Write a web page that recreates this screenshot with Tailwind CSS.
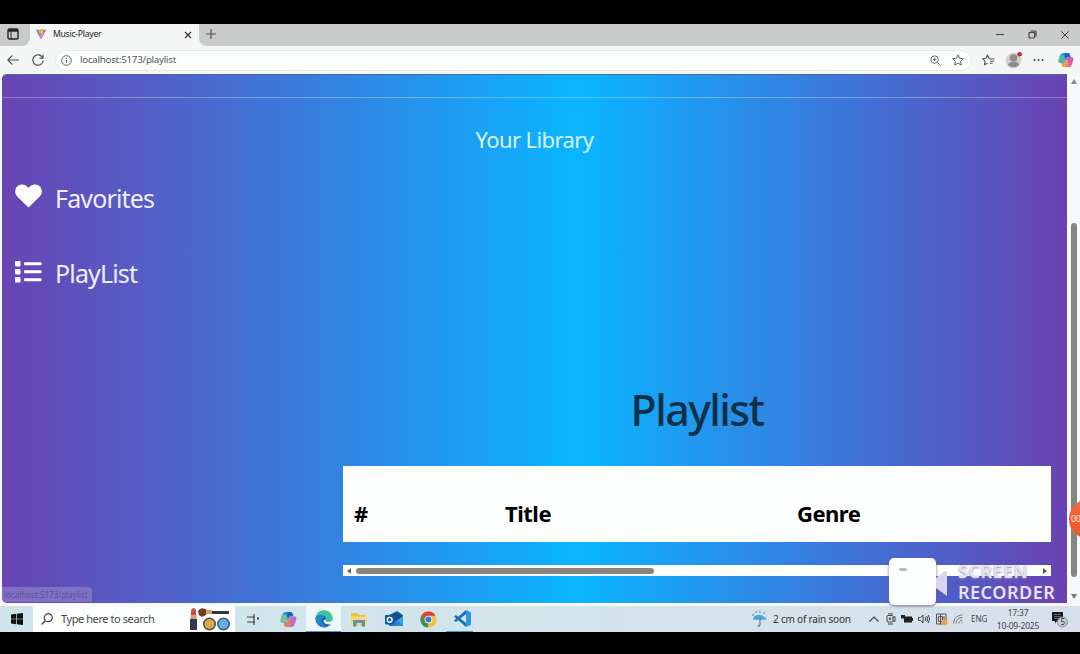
<!DOCTYPE html>
<html lang="en">
<head>
<meta charset="utf-8">
<title>Music-Player</title>
<script src="https://cdn.jsdelivr.net/npm/@tailwindcss/browser@4"></script>
</head>
<body class="relative flex h-[654px] w-[1080px] flex-col overflow-hidden bg-black pt-6 font-['Noto_Sans','Open_Sans',sans-serif] whitespace-nowrap">

<!-- Tab strip -->
<header class="flex h-[22px] shrink-0 bg-[#f3f6f4]">
  <div class="flex w-[30px] items-center justify-start rounded-br-lg bg-[#c8cbc9] pb-[2px] pl-[7px]">
    <svg class="size-3" viewBox="0 0 12 12" fill="none" stroke="#222" stroke-width="1.4"><rect x="1" y="1" width="10" height="10" rx="1.5"/><path d="M1 2.5h10" stroke-width="2.4"/><path d="M4 3v8" stroke-width="1"/></svg>
  </div>
  <div class="flex w-[169px] items-center pr-[7px] pl-[5px] pb-[3px]">
    <svg class="size-3" viewBox="0 0 12 12"><defs><linearGradient id="vite" x1="0" y1="0" x2="1" y2="0.5"><stop offset="0" stop-color="#58b5e0"/><stop offset=".5" stop-color="#a06bd0"/><stop offset="1" stop-color="#b08be0"/></linearGradient></defs><path d="M0.5 1.5 6 2.3 11.5 1.5 6 11.5Z" fill="url(#vite)"/><path d="M4 1.5 8.7 .8 7.8 4.2 9 4 5.7 9.5 6 5.5 4.3 6Z" fill="#f2b632"/></svg>
    <span class="ml-[6px] text-[8.6px] leading-3 tracking-[-0.25px] text-[#222]">Music-Player</span>
    <svg class="mt-[2px] ml-auto size-2" viewBox="0 0 8 8" stroke="#333" stroke-width="1.2"><path d="M1 1l6 6M7 1L1 7"/></svg>
  </div>
  <div class="flex flex-1 items-center rounded-bl-lg bg-[#c8cbc9] pr-[11px] pl-[7px] pb-[3px]">
    <svg class="size-[10px]" viewBox="0 0 10 10" stroke="#555" stroke-width="1.2"><path d="M5 0v10M0 5h10"/></svg>
    <div class="ml-auto flex items-center gap-[24px] pt-[2px]">
      <svg class="h-2 w-2" viewBox="0 0 8 8" stroke="#444" stroke-width="1"><path d="M0 3.5h8"/></svg>
      <svg class="size-[9px]" viewBox="0 0 9 9" fill="none" stroke="#444" stroke-width="1.2"><rect x="1" y="2.4" width="5.6" height="5.6" rx="1"/><path d="M2.8 1H7q1 0 1 1v4.5"/></svg>
      <svg class="size-2" viewBox="0 0 8 8" stroke="#444" stroke-width="1"><path d="M.3.3l7.4 7.4M7.7.3L.3 7.7"/></svg>
    </div>
  </div>
</header>

<!-- Address bar -->
<div class="flex h-7 shrink-0 items-center bg-[#f3f6f5] pl-[7px] pr-[6px]">
  <svg class="h-[10px] w-3" viewBox="0 0 12 10" fill="none" stroke="#555" stroke-width="1.1"><path d="M12 5H1M5.3.5.8 5l4.500 4.500"/></svg>
  <svg class="ml-[13px] size-3" viewBox="0 0 12 12" fill="none" stroke="#555" stroke-width="1.2"><path d="M10.8 4A5.2 5.2 0 1 0 11.2 6.5M11 .8V4.2H7.6"/></svg>
  <div class="ml-[11px] flex h-[21px] w-[917px] items-center rounded-full border border-[#e3e7e5] bg-[#fdfffe] pl-[5px] pr-[7px]">
    <svg class="size-[11px]" viewBox="0 0 11 11" fill="none" stroke="#666" stroke-width="1"><circle cx="5.5" cy="5.5" r="4.8"/><path d="M5.5 5v3M5.5 2.8v1.1"/></svg>
    <span class="ml-[8px] text-[9.8px] leading-3 tracking-[-0.28px] text-[#555]">localhost:5173/playlist</span>
    <svg class="ml-auto size-[11px]" viewBox="0 0 11 11" fill="none" stroke="#666" stroke-width="1"><circle cx="4.6" cy="4.6" r="3.7"/><path d="M7.4 7.4l3.2 3.2M2.8 4.6h3.6M4.6 2.8v3.6"/></svg>
    <svg class="ml-[11px] size-3" viewBox="0 0 12 12" fill="none" stroke="#666" stroke-width="1" stroke-linejoin="round"><path d="M6 .8l1.6 3.4 3.7.5-2.7 2.6.7 3.7L6 9.2 2.7 11l.7-3.7L.7 4.7l3.7-.5Z"/></svg>
  </div>
  <svg class="ml-[10px] h-3 w-[13px]" viewBox="0 0 13 12" fill="none" stroke="#555" stroke-width="1.1" stroke-linejoin="round"><path d="M8.4 4.2 6.9 4.1 5.5 1 4 4.2.6 4.7 3 7.2l-.6 3.6 3.1-1.5M8 5h4.5M8 7.2h4M8 9.3h2.5"/></svg>
  <svg class="ml-[10px] h-[18px] w-[18px]" viewBox="0 0 18 18"><circle cx="8.5" cy="9.5" r="7.8" fill="#d2d0cf"/><circle cx="8.5" cy="7" r="3.7" fill="#8d8b8b"/><path d="M3 14q0-3 5.5-3T14 14q-5.500 4.500-11 0Z" fill="#8d8b8b"/><circle cx="14.600" cy="3.200" r="2.300" fill="#c3292c"/></svg>
  <svg class="ml-[10px] h-3 w-[11px]" viewBox="0 0 11 12" fill="#444"><circle cx="1.500" cy="6" r="1"/><circle cx="5.500" cy="6" r="1"/><circle cx="9.500" cy="6" r="1"/></svg>
  <svg class="ml-auto size-4" viewBox="0 0 16 16"><path d="M5 1h5q1.500 0 2 2l.5 2H9L6.500 11H3Q0 11 .7 8L2 3.500Q3 1 5 1Z" fill="#2793d8"/><path d="M2 3.500 .7 8Q0 11 3 11h3.500l1-4L5 3Z" fill="#51b9a0"/><path d="M10 1q1.500 0 2 2l.5 2H9l-1.500 3L6.500 3Q7 1 8 1Z" fill="#2161c8"/><path d="M13 5q3 0 2.300 3L14 12.500Q13 15 11 15H6q-1.500 0-2-2l-.5-2H7L9.500 5Z" fill="#d95caa"/><path d="M3.500 11H7l2-4 1.500 5Q10 15 8 15H6q-2 0-2.500-4Z" fill="#f59a48"/></svg>
</div>

<!-- Viewport -->
<div class="flex h-[532px] shrink-0 bg-[#f6f8fa] pl-[2px] pb-[3px]">
  <main class="relative flex w-[1065px] flex-col overflow-hidden rounded-tl-[5px] rounded-bl-[5px] border-t border-[#4a66a8] bg-[linear-gradient(90deg,#6944b4_0%,#535fc7_14%,#3f75d8_25%,#0ab4ff_53.500%,#0ab4ff_54.500%,#3f73d8_80%,#535bc4_90%,#6a42b2_100%)]">
    <div class="h-[23px] shrink-0 border-b border-white/30"></div>
    <h2 class="mt-[26px] text-center text-[22px] leading-[30px] tracking-[-0.6px] text-[#d8f4ff]">Your Library</h2>
    <nav class="mt-[26px] flex flex-col gap-[39px] pl-[13px] text-[25px] leading-9 tracking-[-0.85px] text-[#eeeefc]">
      <a class="flex items-center"><svg class="mb-[4px] h-6 w-[27px]" viewBox="0 0 27 24" fill="#fff"><path d="M13.500 23.500 2 12.200C-1 9 0 4 3 1.800 6.500-.6 10.500.3 13.500 3.800 16.500.3 20.500-.6 24 1.800 27 4 28 9 25 12.200Z"/></svg><span class="ml-[13px]">Favorites</span></a>
      <a class="flex items-center"><svg class="mb-[3px] h-6 w-[27px]" viewBox="0 0 27 24" fill="#fff"><rect x="0" y="1" width="5.500" height="5.500" rx="1"/><rect x="0" y="9" width="5.500" height="5.500" rx="1"/><rect x="0" y="17" width="5.500" height="5.500" rx="1"/><rect x="9" y="2.300" width="17.500" height="3" rx="1"/><rect x="9" y="10.300" width="17.500" height="3" rx="1"/><rect x="9" y="18.300" width="17.500" height="3" rx="1"/></svg><span class="ml-[13px]">PlayList</span></a>
    </nav>
    <section class="mt-[88px] ml-[341px] w-[708px]">
      <h1 class="pt-px text-center text-[43px] leading-[60px] font-medium tracking-[-1.6px] text-[#102f48]">Playlist</h1>
      <div class="mt-[26px] flex h-[76px] items-end bg-[#fcfffe] pb-[14px] text-[22px] leading-[30px] font-bold tracking-[-0.5px] text-black">
        <span class="w-[162px] pl-[11px]">#</span><span class="w-[292px]">Title</span><span>Genre</span>
      </div>
      <div class="mt-[23px] flex h-[11px] items-center justify-between bg-[#fcfffe] px-1">
        <svg class="h-[6px] w-1" viewBox="0 0 4 6" fill="#666"><path d="M4 0v6L0 3Z"/></svg>
        <div class="mr-auto ml-[5px] h-[6px] w-[298px] rounded-full bg-[#858585]"></div>
        <svg class="h-[6px] w-1" viewBox="0 0 4 6" fill="#555"><path d="M0 0v6l4-3Z"/></svg>
      </div>
    </section>
    <div class="absolute bottom-[1px] left-0 h-[15px] w-[90px] rounded-tr-sm bg-[#8779c5]/80 pl-[2px] text-[8px] leading-[15px] text-[#5a529c]">localhost:5173/playlist</div>
  </main>
  <div class="flex flex-1 flex-col items-center pt-[5px] pb-1">
    <svg class="h-[5px] w-[6px]" viewBox="0 0 6 5" fill="#888"><path d="M3 0 6 5H0Z"/></svg>
    <div class="mt-[139px] h-[354px] w-[6px] rounded-full bg-[#858585]"></div>
    <svg class="mt-auto h-[5px] w-[6px]" viewBox="0 0 6 5" fill="#777"><path d="M0 0h6L3 5Z"/></svg>
  </div>
</div>

<!-- Taskbar -->
<footer class="flex h-[26px] shrink-0 items-center bg-[linear-gradient(90deg,#cde5eb,#d3e4eb_45%,#d7e0ec)]">
  <div class="flex w-[33px] justify-center"><svg class="size-3" viewBox="0 0 12 12" fill="#111"><path d="M0 1.500 5.300.8v4.900H0ZM6 .7 12 0v5.700H6ZM0 6.300h5.300v4.900L0 10.500ZM6 6.300h6V12l-6-.7Z"/></svg></div>
  <div class="flex h-full w-[202px] items-center bg-[#fcfffe] pl-2">
    <svg class="size-3" viewBox="0 0 12 12" fill="none" stroke="#444" stroke-width="1.200"><circle cx="7.300" cy="4.700" r="4"/><path d="M4.500 7.500.5 11.500"/></svg>
    <span class="ml-2 text-[11px] leading-4 tracking-[-0.42px] text-[#444]">Type here to search</span>
    <svg class="ml-auto h-6 w-[46px]" viewBox="0 0 46 24"><path d="M2 3q3-4 5 0v8H2Z" fill="#c55448"/><rect x="1.500" y="8" width="6" height="4" fill="#d99c7a"/><rect x="1" y="12" width="7" height="11" fill="#343b50"/><path d="M9 4q3-5 9-1v4q-5 5-8 1Z" fill="#6b4027"/><path d="M17 3h6v4h-6Z" fill="#d3a06b"/><path d="M23 4h17v3H23Z" fill="#343536"/><circle cx="20.500" cy="17" r="6.500" fill="#4c4d4c"/><circle cx="20.500" cy="17" r="5" fill="#dba94a"/><circle cx="34.500" cy="17" r="6.500" fill="#44576b"/><circle cx="34.500" cy="17" r="5" fill="#63aee9"/></svg>
  </div>
  <div class="flex w-9 justify-center"><svg class="h-[11px] w-3" viewBox="0 0 12 11" fill="none" stroke="#444" stroke-width="1.200"><path d="M0 3h8M0 8h8M7 0v11"/><path d="M10 4.500h2" stroke-width="2"/></svg></div>
  <div class="flex w-[35px] justify-center"><svg class="size-[17px]" viewBox="0 0 16 16"><path d="M5 1h5q1.500 0 2 2l.5 2H9L6.500 11H3Q0 11 .7 8L2 3.500Q3 1 5 1Z" fill="#2793d8"/><path d="M2 3.500 .7 8Q0 11 3 11h3.500l1-4L5 3Z" fill="#7cbda0"/><path d="M10 1q1.500 0 2 2l.5 2H9l-1.500 3L6.500 3Q7 1 8 1Z" fill="#2161b8"/><path d="M13 5q3 0 2.300 3L14 12.500Q13 15 11 15H6q-1.500 0-2-2l-.5-2H7L9.500 5Z" fill="#b870cc"/><path d="M3.500 11H7l2-4 1.500 5Q10 15 8 15H6q-2 0-2.500-4Z" fill="#ee7c5c"/></svg></div>
  <div class="flex h-full w-[35px] items-center justify-center border-b border-[#4b94cf] bg-[#edf7f8]"><svg class="size-[18px]" viewBox="0 0 18 18"><circle cx="9" cy="9" r="8.500" fill="#1769b5"/><path d="M.8 7C2 2.500 5 .5 9 .5c5 0 8.500 3.500 8.500 7.500 0 2.500-2 4-4.500 4-2 0-3-1-2-2.500C12 6 6 3.500 .8 7Z" fill="#3fc39b"/><path d="M.7 8C3 4 9 4.500 10 7.500 7 7 5.500 10 7 13q2 4 8 2.500Q9 19.500 4 15 .5 12 .7 8Z" fill="#2189d0"/><path d="M11 9.500Q10 12 13 12q3 0 4.300-2l.7 2q-1 2-4 2.500Q9 14 8.500 11Q9 9 11 9.500Z" fill="#edf7f8"/></svg></div>
  <div class="flex w-[35px] justify-center"><svg class="h-[15px] w-4" viewBox="0 0 16 15"><path d="M0 1h6l1.500 2H15v11H0Z" fill="#efbd4a"/><path d="M0 4.500h16V14H0Z" fill="#f8d775"/><path d="M2 8h12v6.500h-3.500V11h-5v3.500H2Z" fill="#648fac"/></svg></div>
  <div class="flex w-[35px] justify-center"><svg class="h-4 w-[18px]" viewBox="0 0 18 16"><path d="M4 4 12 0l6 4v11H4Z" fill="#1763b0"/><path d="M5 4 14 2l3 4-6 5-6-3Z" fill="#174b82"/><path d="m18 5-8 6 8 4Z" fill="#36a3e7"/><path d="M4 15l8-6 6 6Z" fill="#2383d5"/><rect y="4" width="9.500" height="9.500" rx="1" fill="#125aa4"/><circle cx="4.700" cy="8.800" r="2.400" fill="none" stroke="#fff" stroke-width="1.400"/></svg></div>
  <div class="flex w-[35px] justify-center"><svg class="size-[17px]" viewBox="0 0 18 18"><circle cx="9" cy="9" r="8.500" fill="#f2bf36"/><path d="M1.600 4.800A8.500 8.500 0 0 1 16.400 5H9L5.500 11Z" fill="#d64538"/><path d="M1.600 4.800 5.500 11 9 13l-1 4.500A8.500 8.500 0 0 1 1.600 4.800Z" fill="#369451"/><circle cx="9" cy="9" r="4.100" fill="#f3f6f4"/><circle cx="9" cy="9" r="3.100" fill="#3d78d0"/></svg></div>
  <div class="flex h-full w-[27px] items-center justify-center border-b border-[#4b94cf]"><svg class="ml-[6px] size-[17px]" viewBox="0 0 17 17"><path d="M12 0v17L0 6.500 2 5l10 8V4L2 12 0 10.500Z" fill="#1870b5"/><path d="M12 0l5 2.300v12.400L12 17Z" fill="#2d96df"/></svg></div>
  <svg class="ml-[279px] size-4" viewBox="0 0 16 16"><path d="M1 9Q1 4 7 4t8 5q-1.500-1-3 0-1.500-1-3 0-2-1-4 0-2-1-4 0Z" fill="#4ba5dc"/><path d="M8 7v7q-1 2-2.500.5" fill="none" stroke="#5e7788" stroke-width="1.200"/><path d="M4 0v2M8 0v2M12 1v2M1 3v2" stroke="#48a1e0" stroke-width="1.300"/></svg>
  <span class="ml-[5px] w-[79px] text-[10px] leading-4 tracking-[-0.2px] text-[#333]">2 cm of rain soon</span>
  <svg class="ml-[17px] h-[6px] w-[10px]" viewBox="0 0 10 6" fill="none" stroke="#444" stroke-width="1.100"><path d="M.5 5.500 5 1l4.500 4.500"/></svg>
  <div class="ml-[7px] flex items-center gap-[5px]">
    <svg class="h-3 w-[10px]" viewBox="0 0 10 12" fill="none" stroke="#444"><rect x="1" y="2.500" width="6" height="6.500" rx="1"/><path d="M2 .8h5M2 11h5M7 4.500l2-1v5l-2-1"/><circle cx="4" cy="5.700" r="1"/></svg>
    <svg class="h-[10px] w-3" viewBox="0 0 12 10" fill="#222"><rect x="3" y="2.500" width="8" height="6"/><path d="M11 4h1v3h-1ZM0 1h4v3.500H0Z"/></svg>
    <svg class="h-[10px] w-3" viewBox="0 0 12 10" fill="none" stroke="#444"><path d="M.5 3.500h2L5 1v8L2.500 6.500h-2ZM7 3q1.500 2 0 4M8.700 2q2 3 0 6M10.300 1q2.500 4 0 8"/></svg>
    <svg class="size-[13px]" viewBox="0 0 13 13" fill="none" stroke="#555"><path d="M1.500 1H11v10H1.500ZM3.500 3.500h4v5h-4ZM5.500 1v10M9 3v5"/><circle cx="9.500" cy="9.500" r="3" fill="#eda63c" stroke="none"/></svg>
    <svg class="size-[10px]" viewBox="0 0 10 10" fill="none" stroke="#777"><path d="M.5 9.500Q1 1.500 9.500.8M3 9.500Q3 4 9.500 3.500M5.500 9.500Q6 6.500 9.500 6.300M8.500 9.500l1-1"/></svg>
  </div>
  <span class="ml-2 w-4 text-[8px] leading-4 text-[#444]">ENG</span>
  <div class="ml-[9px] w-[44px] text-center text-[8.500px] leading-[13px] tracking-[-0.2px] text-[#444]">17:37<br>10-09-2025</div>
  <svg class="ml-[11px] h-[17px] w-[18px]" viewBox="0 0 18 17"><path d="M1 1h11v9H6l-2 2.500V10H1Z" fill="#161a20"/><path d="M3 3.500h7M3 5.500h7M3 7.500h5" stroke="#7d858c" stroke-width=".7"/><circle cx="11.500" cy="11" r="5" fill="#c9d0d8" stroke="#777" stroke-width=".8"/><text x="9.400" y="14" font-size="8" fill="#222">5</text></svg>
</footer>

<!-- Recorder overlay -->
<div class="absolute top-[558px] left-[889px] flex h-[47px] w-[180px]">
  <div class="h-[47px] w-[47px] rounded-[5px] bg-[#fbfdfe] pt-[10px] pl-[10px] shadow-[0_1px_3px_#667]"><div class="h-[3px] w-2 rounded-sm bg-[#b8bbbc]"></div></div>
  <svg class="mt-[13px] h-[26px] w-[11px]" viewBox="0 0 11 26" fill="#d9d3ef"><path d="M0 7 9 0q2-.5 2 2v23L0 17Z"/></svg>
  <div class="ml-[11px] pt-[3px] text-[18px] leading-[21px] font-semibold tracking-[0.5px]"><div class="text-[#e6e2f3] [text-shadow:0_1px_2px_#8f8aab]">SCREEN</div><div class="text-[#ece2fb]">RECORDER</div></div>
</div>
<div class="absolute top-[499px] left-[1069px] flex size-10 items-center rounded-full bg-[linear-gradient(#f4693c,#ee5528)] pl-[2px] text-[9px] tracking-[-0.5px] text-[#ffe6da]">00</div>
</body>
</html>
